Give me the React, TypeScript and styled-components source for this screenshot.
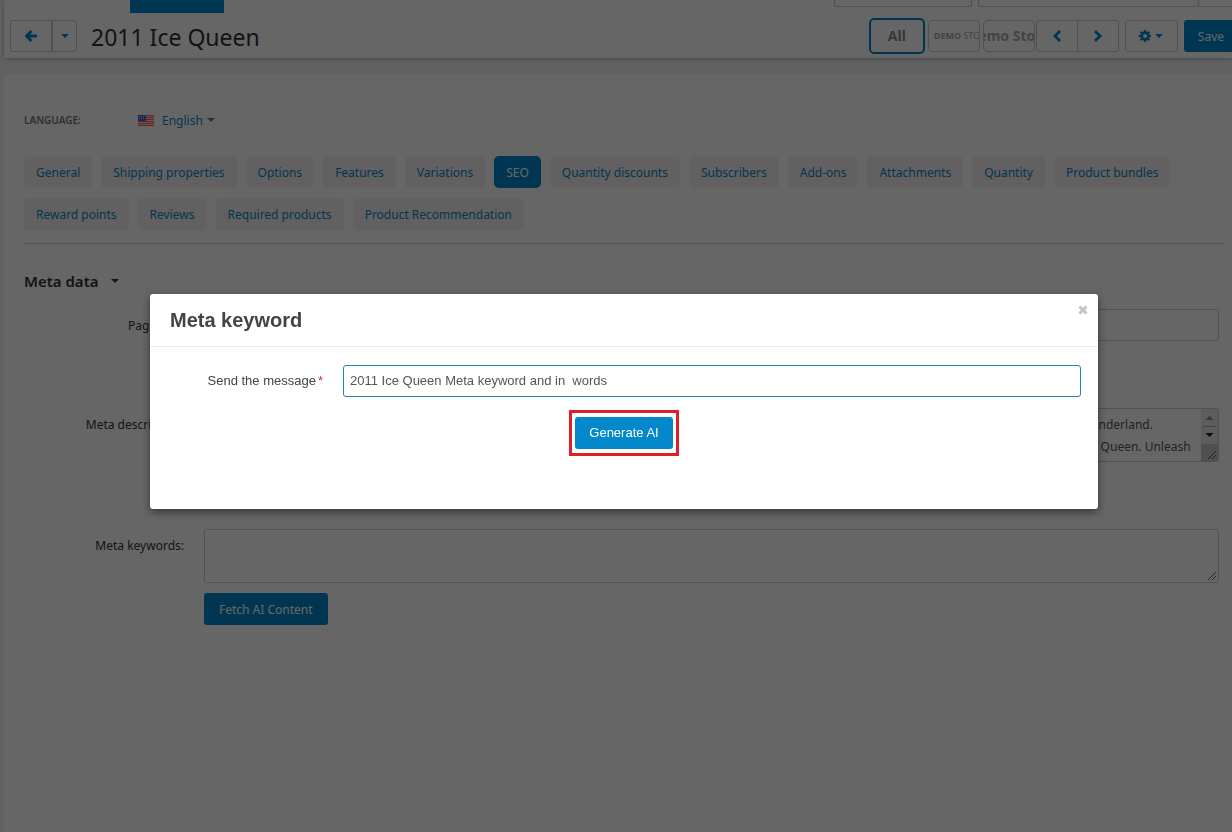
import React from "react";
import styled, { createGlobalStyle } from "styled-components";

const GlobalStyle = createGlobalStyle`
  *, *::before, *::after { box-sizing: border-box; }
  html, body, #root { height: 100%; }
  body {
    margin: 0;
    overflow: hidden;
    background: #f0f2f7;
    color: #333;
    font: 12px/22px "Noto Sans", "Open Sans", sans-serif;
  }
  button, input, textarea { font: inherit; color: inherit; margin: 0; }
  h1, h2 { margin: 0; }
`;

const blue = "#0388cc";

const Page = styled.div`
  display: flex;
  flex-direction: column;
  min-height: 100%;
  padding-left: 4px;
`;

const Header = styled.header`
  background: #fff;
  box-shadow: 0 1px 4px rgba(0, 0, 0, 0.25);
`;

const NavBar = styled.div`
  display: flex;
  height: 14px;
  padding-left: 126px;
  border-bottom: 1px solid #f7f7f7;
`;

const ActiveNav = styled.div`
  width: 94px;
  height: 13px;
  background: ${blue};
`;

const NavField = styled.div<{ $width: number; $push?: boolean }>`
  width: ${(p) => p.$width}px;
  height: 7px;
  margin-left: ${(p) => (p.$push ? "auto" : "6px")};
  border: 1px solid #c4c8ce;
  border-top: 0;
  border-radius: 0 0 3px 3px;
`;

const NavEnd = styled.div`
  width: 33px;
  height: 7px;
  border-bottom: 1px solid #c4c8ce;
`;

const Toolbar = styled.div`
  display: flex;
  align-items: center;
  height: 44px;
  padding-left: 6px;
`;

const Title = styled.h1`
  flex: 1;
  margin-left: 14px;
  padding-top: 2px;
  font-size: 23px;
  font-weight: 400;
  line-height: 32px;
`;

const ButtonGroup = styled.div`
  display: flex;
`;

const ToolButton = styled.button<{ $width: number }>`
  display: flex;
  align-items: center;
  justify-content: center;
  gap: 4px;
  width: ${(p) => p.$width}px;
  height: 32px;
  padding: 0;
  border: 1px solid #c4c8ce;
  border-radius: 3px;
  background: #fff;
  color: ${blue};
  ${ButtonGroup} & + & { margin-left: -1px; }
  ${ButtonGroup} &:first-child { border-radius: 3px 0 0 3px; }
  ${ButtonGroup} &:last-child { border-radius: 0 3px 3px 0; }
`;

const Actions = styled.div`
  display: flex;
  align-items: center;
  gap: 6px;
`;

const Stores = styled.div`
  display: flex;
  align-items: center;
  gap: 3px;
  margin-right: -5px;
`;

const StoreButton = styled.button<{ $active?: boolean; $start?: boolean; $size: number }>`
  display: flex;
  align-items: center;
  justify-content: ${(p) => (p.$start ? "flex-start" : "center")};
  width: ${(p) => (p.$active ? 56 : 52)}px;
  height: ${(p) => (p.$active ? 36 : 32)}px;
  padding: 0 0 0 ${(p) => (p.$start ? 5 : 0)}px;
  overflow: hidden;
  border: ${(p) => (p.$active ? `2px solid ${blue}` : "1px solid #c4c8ce")};
  border-radius: 5px;
  background: #fff;
  color: ${(p) => (p.$active ? "#8a8a8a" : "#aaa")};
  font-size: ${(p) => p.$size}px;
  font-weight: 700;
  white-space: nowrap;
`;

const LightText = styled.span`
  font-weight: 400;
`;

const SaveButton = styled.button`
  height: 32px;
  padding: 2px 8px 0 14px;
  border: 0;
  border-radius: 3px 0 0 3px;
  background: ${blue};
  color: #fff;
`;

const Card = styled.main`
  flex: 1;
  margin-top: 16px;
  padding: 35px 8px 0 20px;
  border-radius: 3px 0 0 0;
  background: #fff;
`;

const LanguageRow = styled.div`
  display: flex;
  align-items: center;
  height: 22px;
`;

const LanguageLabel = styled.span`
  width: 114px;
  color: #777;
  font-size: 10px;
  font-weight: 600;
`;

const LanguageButton = styled.button`
  display: flex;
  align-items: center;
  gap: 4px;
  padding: 0;
  border: 0;
  background: none;
  color: ${blue};
  line-height: 24px;
`;

const LanguageName = styled.span`
  padding-top: 2px;
`;

const Flag = styled.svg`
  margin-right: 4px;
`;

const Tabs = styled.nav`
  display: flex;
  flex-wrap: wrap;
  gap: 10px 9px;
  margin-top: 25px;
  padding-bottom: 13px;
  border-bottom: 1px solid #d5d5d5;
`;

const Tab = styled.a<{ $active?: boolean }>`
  height: 32px;
  padding: 1px 12px 0;
  border-radius: 5px;
  background: ${(p) => (p.$active ? blue : "#f5f0f1")};
  color: ${(p) => (p.$active ? "#fff" : blue)};
  line-height: 32px;
  text-decoration: none;
`;

const SectionTitle = styled.h2`
  display: flex;
  align-items: center;
  gap: 12px;
  margin-top: 26px;
  font-size: 15px;
  font-weight: 600;
  line-height: 22px;
`;

const Form = styled.form`
  display: flex;
  flex-direction: column;
  padding: 17px 5px 0 0;
`;

const Field = styled.div<{ $space: number }>`
  display: grid;
  grid-template-columns: 160px 1fr;
  column-gap: 20px;
  margin-bottom: ${(p) => p.$space}px;
`;

const FieldLabel = styled.label`
  padding-top: 6px;
  text-align: right;
`;

const TextInput = styled.input`
  width: 100%;
  height: 32px;
  padding: 4px 6px 6px;
  border: 1px solid #c4c8ce;
  border-radius: 3px;
  background: #fff;
`;

const AreaBox = styled.div`
  display: flex;
  position: relative;
  height: 54px;
  overflow: hidden;
  border: 1px solid #c4c8ce;
  border-radius: 3px;
`;

const TextArea = styled.textarea`
  flex: 1;
  min-width: 0;
  padding: 5px 6px;
  overflow: hidden;
  border: 0;
  background: #fff;
  color: #555;
  resize: none;
  white-space: pre;
`;

const Grip = styled.svg`
  position: absolute;
  right: 1px;
  bottom: 1px;
`;

const FetchButton = styled.button`
  justify-self: start;
  grid-column: 2;
  height: 32px;
  margin-top: 10px;
  padding: 2px 15px 0;
  border: 0;
  border-radius: 3px;
  background: ${blue};
  color: #fff;
`;

const Backdrop = styled.div`
  position: fixed;
  inset: 0;
  padding: 294px 134px 0 150px;
  background: rgba(0, 0, 0, 0.6);
`;

const Modal = styled.section`
  min-height: 215px;
  border-radius: 3px;
  background: #fff;
  box-shadow: 0 3px 9px rgba(0, 0, 0, 0.5);
  color: #444;
  font: 13px/20px "Liberation Sans", Arial, sans-serif;
`;

const ModalHeader = styled.div`
  display: flex;
  justify-content: space-between;
  align-items: flex-start;
  height: 53px;
  padding: 11px 10px 0 20px;
  border-bottom: 1px solid #eee;
`;

const ModalTitle = styled.h2`
  font-size: 20px;
  font-weight: 700;
  line-height: 30px;
`;

const CloseButton = styled.button`
  display: flex;
  padding: 0;
  border: 0;
  background: none;
  color: #c4c4c4;
`;

const MessageRow = styled.div`
  display: grid;
  grid-template-columns: 153px 1fr;
  column-gap: 20px;
  align-items: center;
  padding: 18px 17px 13px 20px;
`;

const MessageLabel = styled.label`
  text-align: right;
`;

const Required = styled.span`
  margin-left: 2px;
  color: #e0243a;
`;

const MessageInput = styled(TextInput)`
  border-color: #1a86b4;
  color: #555;
`;

const Highlight = styled.div`
  width: fit-content;
  margin: 0 auto;
  padding: 4px 3px;
  border: 3px solid #dc2228;
`;

const GenerateButton = styled.button`
  display: block;
  width: 98px;
  height: 32px;
  padding: 0;
  border: 0;
  border-radius: 3px;
  background: ${blue};
  color: #fff;
`;

const Caret = ({ color = "currentColor" }: { color?: string }) => (
  <svg width="8" height="4" viewBox="0 0 8 4" aria-hidden="true">
    <path d="M0 0h8L4 4z" fill={color} />
  </svg>
);

const ArrowLeft = () => (
  <svg width="12" height="12" viewBox="0 0 12 12" aria-hidden="true">
    <path d="M6.5 1 1.5 6l5 5M2 6h10" fill="none" stroke="currentColor" strokeWidth="2.8" />
  </svg>
);

const Chevron = ({ next }: { next?: boolean }) => (
  <svg width="10" height="14" viewBox="0 0 10 14" aria-hidden="true">
    <path d={next ? "M2 2l5 5-5 5" : "M8 2L3 7l5 5"} fill="none" stroke="currentColor" strokeWidth="2.8" />
  </svg>
);

const Gear = () => (
  <svg width="12" height="12" viewBox="-6 -6 12 12" aria-hidden="true">
    <circle r="3.2" fill="none" stroke="currentColor" strokeWidth="2.4" />
    {[0, 45, 90, 135].map((a) => (
      <path key={a} d="M-1.2-6h2.4v2.4h-2.4zM-1.2 3.6h2.4V6h-2.4z" fill="currentColor" transform={`rotate(${a})`} />
    ))}
  </svg>
);

const ResizeGrip = () => (
  <Grip width="10" height="10" viewBox="0 0 10 10" aria-hidden="true">
    <path d="M1 9l8-8M5 9l4-4" stroke="#555" fill="none" />
  </Grip>
);

const ScrollTrack = () => (
  <svg width="17" height="52" viewBox="0 0 17 52" aria-hidden="true">
    <path d="M0 0h17v52H0z" fill="#e8e8e8" />
    <path d="M0 35h17v17H0z" fill="#c8c8c8" />
    <path d="M2 17.5h13" stroke="#aaa" />
    <path d="M4.500 11h8l-4-4z" fill="#888" />
    <path d="M4.500 24h8l-4 4z" fill="#222" />
  </svg>
);

const tabs = [
  "General", "Shipping properties", "Options", "Features", "Variations", "SEO",
  "Quantity discounts", "Subscribers", "Add-ons", "Attachments", "Quantity",
  "Product bundles", "Reward points", "Reviews", "Required products",
  "Product Recommendation",
];

const description =
  "Experience the magic of winter with the 2011 Ice Queen collectible doll, a sparkling figure dressed for snowy and enchanted journey into the frozen winter wonderland.\n" +
  "Discover her delicate crown, icy gown and graceful details, and bring home the timeless elegance and truly magical beauty of the frozen world of the 2011 Ice Queen. Unleash";

export default function App() {
  return (
    <>
      <GlobalStyle />
      <Page>
        <Header>
          <NavBar>
            <ActiveNav />
            <NavField $width={138} $push />
            <NavField $width={221} />
            <NavEnd />
          </NavBar>
          <Toolbar>
            <ButtonGroup>
              <ToolButton $width={42} aria-label="Back"><ArrowLeft /></ToolButton>
              <ToolButton $width={25} aria-label="Back options"><Caret /></ToolButton>
            </ButtonGroup>
            <Title>2011 Ice Queen</Title>
            <Actions>
              <Stores>
                <StoreButton $active $size={14}>All</StoreButton>
                <StoreButton $start $size={9}>
                  <span>DEMO <LightText>STORE</LightText></span>
                </StoreButton>
                <StoreButton $size={14}>Demo Store</StoreButton>
              </Stores>
              <ButtonGroup>
                <ToolButton $width={42} aria-label="Previous"><Chevron /></ToolButton>
                <ToolButton $width={42} aria-label="Next"><Chevron next /></ToolButton>
              </ButtonGroup>
              <ToolButton $width={53} aria-label="Settings"><Gear /><Caret /></ToolButton>
              <SaveButton>Save</SaveButton>
            </Actions>
          </Toolbar>
        </Header>
        <Card>
          <LanguageRow>
            <LanguageLabel>LANGUAGE:</LanguageLabel>
            <LanguageButton>
              <Flag width="16" height="11" viewBox="0 0 16 11" aria-hidden="true">
                <path d="M0 0h16v11H0z" fill="#ffd9d4" />
                <path d="M0 0h16v1H0zM0 2h16v1H0zM0 4h16v1H0zM0 6h16v1H0zM0 8h16v1H0zM0 10h16v1H0z" fill="#ff5548" />
                <path d="M0 0h8v6H0z" fill="#4068e0" />
                <path d="M1 1.500h6M1 3.500h6" stroke="#cdd6f0" strokeDasharray="1 1" />
              </Flag>
              <LanguageName>English</LanguageName>
              <Caret color="#777" />
            </LanguageButton>
          </LanguageRow>
          <Tabs>
            {tabs.map((name) => (
              <Tab key={name} href="#" $active={name === "SEO"}>{name}</Tab>
            ))}
          </Tabs>
          <SectionTitle>Meta data <Caret /></SectionTitle>
          <Form>
            <Field $space={67}>
              <FieldLabel htmlFor="page-title">Page title:</FieldLabel>
              <TextInput id="page-title" />
            </Field>
            <Field $space={67}>
              <FieldLabel htmlFor="description">Meta description:</FieldLabel>
              <AreaBox>
                <TextArea id="description" defaultValue={description} />
                <ScrollTrack />
                <ResizeGrip />
              </AreaBox>
            </Field>
            <Field $space={0}>
              <FieldLabel htmlFor="keywords">Meta keywords:</FieldLabel>
              <AreaBox>
                <TextArea id="keywords" />
                <ResizeGrip />
              </AreaBox>
              <FetchButton type="button">Fetch AI Content</FetchButton>
            </Field>
          </Form>
        </Card>
      </Page>
      <Backdrop>
        <Modal role="dialog" aria-modal="true" aria-labelledby="modal-title">
          <ModalHeader>
            <ModalTitle id="modal-title">Meta keyword</ModalTitle>
            <CloseButton aria-label="Close">
              <svg width="10" height="10" viewBox="0 0 10 10" aria-hidden="true">
                <path d="M1.500 1.500l7 7M8.500 1.500l-7 7" stroke="currentColor" strokeWidth="3" />
              </svg>
            </CloseButton>
          </ModalHeader>
          <form>
            <MessageRow>
              <MessageLabel htmlFor="message">Send the message<Required>*</Required></MessageLabel>
              <MessageInput id="message" defaultValue="2011 Ice Queen Meta keyword and in  words" />
            </MessageRow>
            <Highlight>
              <GenerateButton type="button">Generate AI</GenerateButton>
            </Highlight>
          </form>
        </Modal>
      </Backdrop>
    </>
  );
}
